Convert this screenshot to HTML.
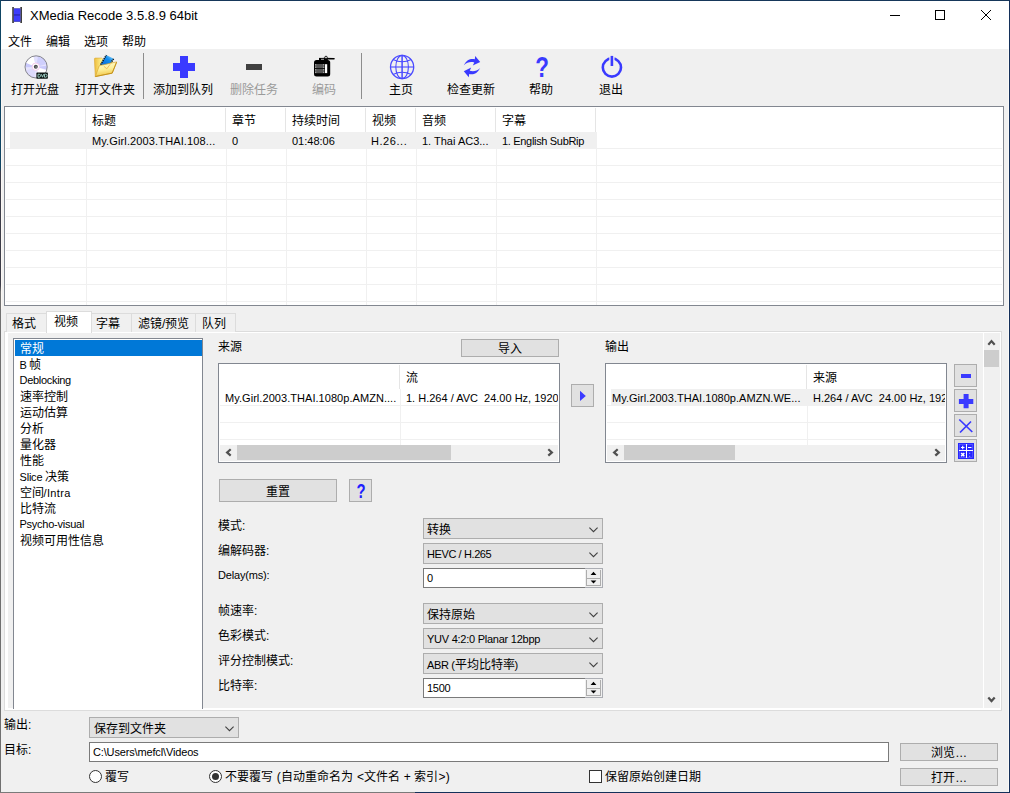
<!DOCTYPE html>
<html lang="zh-CN">
<head>
<meta charset="utf-8">
<title>XMedia Recode</title>
<style>
html,body{margin:0;padding:0;}
body{width:1010px;height:793px;overflow:hidden;background:#f0f0f0;font-family:"Liberation Sans",sans-serif;font-size:12px;color:#000;position:relative;}
.a{position:absolute;white-space:nowrap;}
.t{position:absolute;white-space:nowrap;font-size:12px;line-height:14px;}
.l{position:absolute;white-space:nowrap;font-size:11px;line-height:14px;}
.btn{position:absolute;box-sizing:border-box;background:#e1e1e1;border:1px solid #adadad;text-align:center;font-size:12px;}
.combo{position:absolute;box-sizing:border-box;background:#e1e1e1;border:1px solid #adadad;height:21px;width:180px;}
.combo>span{position:absolute;left:3px;top:4px;font-size:12px;line-height:14px;white-space:nowrap;}
.combo>span.s{font-size:11px;top:3px;}
.combo svg{position:absolute;right:4px;top:7.500px;}
.edit{position:absolute;box-sizing:border-box;background:#fff;border:1px solid #7a7a7a;}
.gl{position:absolute;background:#f0f0f0;}

.tab{box-sizing:border-box;border:1px solid #dcdcdc;border-bottom:none;background:#f0f0f0;}
.s{font-size:11px;}
.spin{width:18px;height:20px;box-sizing:border-box;border:1px solid #abadb3;border-left:none;background:#f0f0f0;}
.spin i{position:absolute;left:1px;top:1px;width:15px;height:16px;box-sizing:border-box;border:1px solid #adadad;border-top:none;background:#f0f0f0;}
.spin b{position:absolute;left:1px;top:9px;width:15px;height:1px;background:#adadad;}
.spin svg{position:absolute;left:5px;top:2px;}
.radio{width:13px;height:13px;box-sizing:border-box;border:1px solid #333;border-radius:50%;background:#fff;}
.radio i{position:absolute;left:2px;top:2px;width:7px;height:7px;border-radius:50%;background:#333;}
</style>
</head>
<body>
<!-- window frame -->
<div class="a" style="left:0;top:0;width:1010px;height:49px;background:#fff;"></div>
<div class="a" style="left:0;top:0;width:1010px;height:1px;background:#16375a;"></div>
<div class="a" style="left:0;top:0;width:1px;height:793px;background:linear-gradient(#0f4564 0,#0f4564 168px,#3c3c48 172px,#3c3c48 285px,#707070 292px,#707070 100%);"></div>
<div class="a" style="left:1009px;top:0;width:1px;height:793px;background:#14305a;"></div>
<div class="a" style="left:0;top:792px;width:1010px;height:1px;background:#7a7a7a;"></div>
<div class="a" style="left:415px;top:792px;width:595px;height:1px;background:#14305a;"></div>

<div class="a" style="left:1px;top:49px;width:1px;height:260px;background:#fbf7f3;"></div>
<div class="a" style="left:1008px;top:49px;width:1px;height:743px;background:#fbf9f7;"></div>
<!-- title -->
<svg class="a" style="left:12px;top:7px" width="10" height="16" viewBox="0 0 10 16"><rect x="0.200" y="0" width="1.700" height="16" fill="#3f3f3f"/><rect x="8.300" y="0" width="1.700" height="16" fill="#3f3f3f"/><rect x="1.900" y="1.300" width="6.400" height="13.500" fill="#2a2ab8"/><rect x="1.900" y="2" width="6.400" height="5.200" fill="#3b3bfa"/><rect x="1.900" y="8.700" width="6.400" height="5.300" fill="#3b3bfa"/></svg>
<div class="a" id="title" style="left:30px;top:7px;font-size:13px;line-height:18px;letter-spacing:0px;">XMedia Recode 3.5.8.9 64bit</div>
<svg class="a" style="left:884px;top:5px" width="112" height="20" viewBox="0 0 112 20"><g stroke="#000" stroke-width="1" fill="none"><path d="M6 10.5H16"/><rect x="51.5" y="5.5" width="9" height="9"/><path d="M97 5L107 15M107 5L97 15"/></g></svg>

<!-- menu -->
<div class="t" style="left:8px;top:35px;">文件</div>
<div class="t" style="left:46px;top:35px;">编辑</div>
<div class="t" style="left:84px;top:35px;">选项</div>
<div class="t" style="left:122px;top:35px;">帮助</div>

<!-- toolbar -->
<div class="t" style="left:11px;top:83px;">打开光盘</div>
<div class="t" style="left:75px;top:83px;">打开文件夹</div>
<div class="a" style="left:143px;top:53px;width:1px;height:46px;background:#8d8d8d;"></div>
<div class="t" style="left:153px;top:83px;">添加到队列</div>
<div class="t" style="left:230px;top:83px;color:#9a9a9a;">删除任务</div>
<div class="t" style="left:312px;top:83px;color:#9a9a9a;">编码</div>
<div class="a" style="left:361px;top:53px;width:1px;height:46px;background:#8d8d8d;"></div>
<div class="t" style="left:389px;top:83px;">主页</div>
<div class="t" style="left:447px;top:83px;">检查更新</div>
<div class="t" style="left:529px;top:83px;">帮助</div>
<div class="t" style="left:599px;top:83px;">退出</div>

<!-- toolbar icons -->
<svg class="a" style="left:23px;top:54px" width="26" height="26" viewBox="0 0 26 26">
<circle cx="13.1" cy="12.9" r="10.9" fill="#e6e4fd"/>
<path d="M13.1 12.9L2.21 13.28A10.9 10.9 0 0 1 2.99 8.82Z" fill="#c9c9fb"/>
<path d="M13.1 12.9L2.99 8.82A10.9 10.9 0 0 1 10.46 2.32Z" fill="#ffffff"/>
<path d="M13.1 12.9L10.46 2.32A10.9 10.9 0 0 1 14.99 2.17Z" fill="#e2e0fe"/>
<path d="M13.1 12.9L14.99 2.17A10.9 10.9 0 0 1 23.63 10.08Z" fill="#cfcffc"/>
<path d="M13.1 12.9L23.94 11.76A10.9 10.9 0 0 1 23.68 15.54Z" fill="#c9c9fb"/>
<path d="M13.1 12.9L23.47 16.27A10.9 10.9 0 0 1 16.47 23.27Z" fill="#ffffff"/>
<path d="M13.1 12.9L11.21 23.63A10.9 10.9 0 0 1 2.86 16.63Z" fill="#dcdafc"/>
<circle cx="13.1" cy="12.9" r="11.1" fill="none" stroke="#85858d" stroke-width="1"/>
<circle cx="12.800" cy="12.700" r="3.700" fill="#fff" stroke="#f2c4ea" stroke-width="0.900"/>
<circle cx="12.800" cy="12.700" r="2" fill="#4a4a4e"/>
<circle cx="13.100" cy="13" r="0.800" fill="#9a9a9e"/>
<rect x="13.400" y="18.600" width="11.500" height="6.100" rx="0.800" fill="#0c1412"/>
<path d="M15 20.200v3h1.200q1.300 0 1.300-1.500t-1.300-1.500zM18.300 20.200l1.200 3l1.200-3M21.500 20.200v3h1.200q1.300 0 1.300-1.500t-1.300-1.500z" fill="none" stroke="#a8dcd2" stroke-width="0.900"/>
</svg>
<svg class="a" style="left:92px;top:53px" width="28" height="26" viewBox="0 0 28 26">
<defs><linearGradient id="fg" x1="0" y1="0" x2="0.200" y2="1"><stop offset="0" stop-color="#fffcd8"/><stop offset="0.550" stop-color="#fdf09a"/><stop offset="1" stop-color="#f2c648"/></linearGradient>
<linearGradient id="fb" x1="0" y1="0" x2="1" y2="0"><stop offset="0" stop-color="#eebc3c"/><stop offset="0.400" stop-color="#fdf08c"/><stop offset="1" stop-color="#fbe680"/></linearGradient>
<linearGradient id="fl" x1="0" y1="1" x2="1" y2="0"><stop offset="0" stop-color="#0a64d8"/><stop offset="0.600" stop-color="#1490f0"/><stop offset="1" stop-color="#a8e4fa"/></linearGradient></defs>
<path d="M2.400 5.700L2.900 5.100L9.600 5.100L11.600 7L20 7L20 13L3.300 23.700Z" fill="url(#fb)" stroke="#d9a630" stroke-width="0.600"/>
<path d="M14.200 2L21.800 5.700L16.500 12.500L8.300 11.700Z" fill="url(#fl)"/>
<path d="M8.600 11.600L14.400 2.100" stroke="#111" stroke-width="1.500" stroke-dasharray="1.200 0.900"/>
<path d="M21.600 5.800L19 9.600" stroke="#111" stroke-width="1.500" stroke-dasharray="1.200 0.900"/>
<path d="M3.300 23.600L7.300 12.700L24.700 8.900L20.200 20.200Z" fill="url(#fg)" stroke="#d8a830" stroke-width="0.700"/>
<path d="M3.500 23.500L20.200 20.100L24.600 9.200" fill="none" stroke="#c4921c" stroke-width="1"/>
<path d="M11.800 13.200L14.800 15.800L18.200 11.200" fill="none" stroke="#f0b050" stroke-width="0.800"/>
</svg>
<svg class="a" style="left:173px;top:56px" width="22" height="22" viewBox="0 0 22 22"><path d="M7 0h8v7h7v8h-7v7h-8v-7h-7v-8h7z" fill="#3a3aff"/></svg>
<div class="a" style="left:246px;top:64px;width:16px;height:6px;background:#404040;"></div>
<svg class="a" style="left:313px;top:55px" width="22" height="23" viewBox="0 0 22 23">
<rect x="1" y="5" width="16.200" height="16.600" rx="2.500" fill="#000"/>
<rect x="6" y="2.900" width="8.800" height="3" fill="#000"/>
<path d="M11 3.600L21 3.800" stroke="#000" stroke-width="1.600" stroke-linecap="round"/>
<circle cx="13" cy="2.500" r="1.300" fill="#ddd" stroke="#000" stroke-width="0.800"/>
<rect x="8" y="3.800" width="3" height="1" fill="#aaa"/>
<rect x="2" y="9" width="9.500" height="4.200" fill="#555"/><rect x="2" y="14" width="9.500" height="4.200" fill="#555"/>
<g fill="#ccc"><rect x="2.200" y="9.300" width="1" height="1"/><rect x="2.200" y="11.700" width="1" height="1"/><rect x="2.200" y="14.300" width="1" height="1"/><rect x="2.200" y="16.800" width="1" height="1"/><rect x="10.200" y="9.300" width="1" height="1"/><rect x="10.200" y="11.700" width="1" height="1"/><rect x="10.200" y="14.300" width="1" height="1"/><rect x="10.200" y="16.800" width="1" height="1"/></g>
<rect x="12" y="9.200" width="2.200" height="8.900" fill="#fff"/>
</svg>
<svg class="a" style="left:389px;top:54px" width="26" height="26" viewBox="0 0 26 26"><g fill="none" stroke="#4a4aff" stroke-width="1.100"><circle cx="13.100" cy="13" r="11.600" stroke-width="1.300"/><ellipse cx="13.100" cy="13" rx="6.300" ry="11.600"/><path d="M13.100 1.400V24.600" stroke-width="1.500"/><path d="M1.500 13H24.700"/><path d="M4 5.500Q13.100 10 22.200 5.500M4 20.500Q13.100 16 22.200 20.500"/></g></svg>
<svg class="a" style="left:462px;top:55px" width="20" height="24" viewBox="0 0 20 24"><g fill="#3a3aff"><path id="ra" d="M1.800 10.200C5 4.200 9 3.300 12.800 4.300L13.200 0.900L18.200 7L10.800 10.600L12.300 7.500C9 6.500 5 7 1.800 10.200Z"/><use href="#ra" transform="rotate(180 10 11.600)"/></g></svg>
<div class="a" style="left:532px;top:51px;width:20px;font-size:29.500px;line-height:32px;font-weight:bold;color:#3a3aff;text-align:center;transform:scaleX(0.76);">?</div>
<svg class="a" style="left:600px;top:55px" width="24" height="24" viewBox="0 0 24 24"><g fill="none"><circle cx="11.900" cy="12.500" r="9.100" stroke="#3a3aff" stroke-width="2.600"/><path d="M11.900 0V10" stroke="#f0f0f0" stroke-width="5.200"/><path d="M11.900 0.900V11" stroke="#3a3aff" stroke-width="2.600"/></g></svg>

<!-- file list -->
<div class="a" id="list" style="left:4px;top:106px;width:1000px;height:200px;box-sizing:border-box;border:1px solid #828790;background:#fff;"></div>
<div class="gl" style="left:10px;top:132px;width:586px;height:16px;"></div>
<!-- row lines -->
<div class="gl" style="left:6px;top:148px;width:996px;height:1px;"></div>
<div class="gl" style="left:6px;top:165px;width:996px;height:1px;"></div>
<div class="gl" style="left:6px;top:182px;width:996px;height:1px;"></div>
<div class="gl" style="left:6px;top:199px;width:996px;height:1px;"></div>
<div class="gl" style="left:6px;top:216px;width:996px;height:1px;"></div>
<div class="gl" style="left:6px;top:233px;width:996px;height:1px;"></div>
<div class="gl" style="left:6px;top:250px;width:996px;height:1px;"></div>
<div class="gl" style="left:6px;top:267px;width:996px;height:1px;"></div>
<div class="gl" style="left:6px;top:284px;width:996px;height:1px;"></div>
<div class="gl" style="left:6px;top:301px;width:996px;height:1px;"></div>
<!-- col lines -->
<div class="gl" style="left:85px;top:108px;width:1px;height:24px;background:#e5e5e5;"></div><div class="gl" style="left:86px;top:132px;width:1px;height:173px;"></div>
<div class="gl" style="left:225px;top:108px;width:1px;height:24px;background:#e5e5e5;"></div><div class="gl" style="left:226px;top:132px;width:1px;height:173px;"></div>
<div class="gl" style="left:285px;top:108px;width:1px;height:24px;background:#e5e5e5;"></div><div class="gl" style="left:286px;top:132px;width:1px;height:173px;"></div>
<div class="gl" style="left:365px;top:108px;width:1px;height:24px;background:#e5e5e5;"></div><div class="gl" style="left:366px;top:132px;width:1px;height:173px;"></div>
<div class="gl" style="left:415px;top:108px;width:1px;height:24px;background:#e5e5e5;"></div><div class="gl" style="left:416px;top:132px;width:1px;height:173px;"></div>
<div class="gl" style="left:495px;top:108px;width:1px;height:24px;background:#e5e5e5;"></div><div class="gl" style="left:496px;top:132px;width:1px;height:173px;"></div>
<div class="gl" style="left:595px;top:108px;width:1px;height:24px;background:#e5e5e5;"></div><div class="gl" style="left:596px;top:132px;width:1px;height:173px;"></div>
<div class="t" style="left:92px;top:114px;">标题</div>
<div class="t" style="left:232px;top:114px;">章节</div>
<div class="t" style="left:292px;top:114px;">持续时间</div>
<div class="t" style="left:372px;top:114px;">视频</div>
<div class="t" style="left:422px;top:114px;">音频</div>
<div class="t" style="left:502px;top:114px;">字幕</div>
<div class="l" style="left:92px;top:134px;letter-spacing:0.13px;">My.Girl.2003.THAI.108...</div>
<div class="l" style="left:232px;top:134px;">0</div>
<div class="l" style="left:292px;top:134px;">01:48:06</div>
<div class="l" style="left:371px;top:134px;letter-spacing:0.55px;">H.26...</div>
<div class="l" style="left:422px;top:134px;">1. Thai AC3...</div>
<div class="l" style="left:502px;top:134px;letter-spacing:-0.32px;">1. English SubRip</div>

<!-- tabs -->
<div class="a" style="left:4px;top:331px;width:998px;height:380px;box-sizing:border-box;border:1px solid #dcdcdc;background:#f0f0f0;"></div>
<div class="a" style="left:5px;top:332px;width:996px;height:378px;box-sizing:border-box;border:1px solid #fff;border-left-width:3px;border-bottom-width:2px;"></div>
<div class="a tab" style="left:6px;top:313px;width:41px;height:19px;"></div>
<div class="a tab" style="left:91px;top:313px;width:41px;height:19px;"></div>
<div class="a tab" style="left:131px;top:313px;width:65px;height:19px;"></div>
<div class="a tab" style="left:195px;top:313px;width:41px;height:19px;"></div>
<div class="a" style="left:46px;top:311px;width:46px;height:22px;box-sizing:border-box;border:1px solid #dcdcdc;border-bottom:none;background:#fff;"></div>
<div class="t" style="left:12px;top:317px;">格式</div>
<div class="t" style="left:54px;top:315px;">视频</div>
<div class="t" style="left:96px;top:317px;">字幕</div>
<div class="t" style="left:138px;top:317px;">滤镜/预览</div>
<div class="t" style="left:202px;top:317px;">队列</div>

<!-- left listbox -->
<div class="a" style="left:13px;top:338px;width:190px;height:371px;box-sizing:border-box;border:1px solid #828790;border-bottom:none;background:#fff;"></div>
<div class="a" style="left:15px;top:340px;width:187px;height:16px;background:#0078d7;"></div>
<div class="t" style="left:19.500px;top:342px;color:#fff;">常规</div>
<div class="t" style="left:19.500px;top:358px;"><span class="s">B</span><span style="letter-spacing:-1.500px"> </span>帧</div>
<div class="t s" style="left:19.500px;top:373px;letter-spacing:-0.3px;">Deblocking</div>
<div class="t" style="left:19.500px;top:390px;">速率控制</div>
<div class="t" style="left:19.500px;top:406px;">运动估算</div>
<div class="t" style="left:19.500px;top:422px;">分析</div>
<div class="t" style="left:19.500px;top:438px;">量化器</div>
<div class="t" style="left:19.500px;top:454px;">性能</div>
<div class="t" style="left:19.500px;top:470px;"><span class="s" style="letter-spacing:-0.2px">Slice</span><span style="letter-spacing:-1px"> </span>决策</div>
<div class="t" style="left:19.500px;top:486px;">空间<span class="s" style="letter-spacing:0.35px">/Intra</span></div>
<div class="t" style="left:19.500px;top:502px;">比特流</div>
<div class="t s" style="left:19.500px;top:517px;letter-spacing:-0.25px;">Psycho-visual</div>
<div class="t" style="left:19.500px;top:534px;">视频可用性信息</div>

<!-- right scrollbar -->
<div class="a" style="left:983px;top:333px;width:1px;height:375px;background:#fff;"></div>
<div class="a" style="left:984px;top:350px;width:15px;height:17px;background:#cdcdcd;"></div>
<svg class="a" style="left:986px;top:337px" width="11" height="10" viewBox="0 0 11 10"><path d="M2.300 7.700L5.500 4.100L8.700 7.700" fill="none" stroke="#505050" stroke-width="2.200"/></svg>
<svg class="a" style="left:986px;top:695px" width="11" height="10" viewBox="0 0 11 10"><path d="M2.300 2.500L5.500 6.100L8.700 2.500" fill="none" stroke="#505050" stroke-width="2.200"/></svg>

<!-- source -->
<div class="t" style="left:218px;top:340px;">来源</div>
<div class="btn" style="left:461px;top:339px;width:98px;height:18px;line-height:18px;">导入</div>
<div class="a" style="left:218px;top:363px;width:342px;height:100px;box-sizing:border-box;border:1px solid #828790;background:#fff;"></div>
<div class="gl" style="left:220px;top:405px;width:338px;height:1px;"></div>
<div class="gl" style="left:220px;top:422px;width:338px;height:1px;"></div>
<div class="gl" style="left:220px;top:439px;width:338px;height:1px;"></div>
<div class="gl" style="left:399px;top:365px;width:1px;height:24px;background:#e5e5e5;"></div>
<div class="gl" style="left:400px;top:389px;width:1px;height:56px;"></div>
<div class="gl" style="left:220px;top:445px;width:338px;height:16px;"></div>
<div class="a" style="left:237px;top:445px;width:214px;height:15px;background:#cdcdcd;"></div>
<svg class="a hs" style="left:223px;top:447px" width="10" height="11" viewBox="0 0 10 11"><path d="M7.700 2.200L4.100 5.400L7.700 8.600" fill="none" stroke="#505050" stroke-width="2.200"/></svg>
<svg class="a hs" style="left:546px;top:447px" width="10" height="11" viewBox="0 0 10 11"><path d="M2.300 2.200L5.900 5.400L2.300 8.600" fill="none" stroke="#505050" stroke-width="2.200"/></svg>
<div class="t" style="left:406px;top:371px;">流</div>
<div class="l" style="left:225px;top:391px;letter-spacing:0.05px;">My.Girl.2003.THAI.1080p.AMZN....</div>
<div class="l" style="left:406px;top:391px;width:152px;overflow:hidden;white-space:pre;">1. H.264 / AVC  24.00 Hz, 1920</div>

<div class="btn" style="left:571px;top:384px;width:23px;height:23px;"></div>
<svg class="a" style="left:579px;top:390px" width="8" height="12" viewBox="0 0 8 12"><path d="M1 0.800L6.800 5.900L1 11Z" fill="#3a3aff"/></svg>

<!-- output -->
<div class="t" style="left:605px;top:340px;">输出</div>
<div class="a" style="left:605px;top:363px;width:342px;height:100px;box-sizing:border-box;border:1px solid #828790;background:#fff;"></div>
<div class="gl" style="left:611px;top:389px;width:334px;height:16px;"></div>
<div class="gl" style="left:607px;top:405px;width:338px;height:1px;"></div>
<div class="gl" style="left:607px;top:422px;width:338px;height:1px;"></div>
<div class="gl" style="left:607px;top:439px;width:338px;height:1px;"></div>
<div class="gl" style="left:806px;top:365px;width:1px;height:24px;background:#e5e5e5;"></div>
<div class="gl" style="left:807px;top:389px;width:1px;height:56px;"></div>
<div class="gl" style="left:607px;top:445px;width:338px;height:16px;"></div>
<div class="a" style="left:624px;top:445px;width:111px;height:15px;background:#cdcdcd;"></div>
<svg class="a hs" style="left:610px;top:447px" width="10" height="11" viewBox="0 0 10 11"><path d="M7.700 2.200L4.100 5.400L7.700 8.600" fill="none" stroke="#505050" stroke-width="2.200"/></svg>
<svg class="a hs" style="left:933px;top:447px" width="10" height="11" viewBox="0 0 10 11"><path d="M2.300 2.200L5.900 5.400L2.300 8.600" fill="none" stroke="#505050" stroke-width="2.200"/></svg>
<div class="t" style="left:813px;top:371px;">来源</div>
<div class="l" style="left:612px;top:391px;letter-spacing:0.03px;">My.Girl.2003.THAI.1080p.AMZN.WE...</div>
<div class="l" style="left:813px;top:391px;width:132px;overflow:hidden;white-space:pre;">H.264 / AVC  24.00 Hz, 1920</div>

<div class="btn" style="left:954px;top:364px;width:23px;height:23px;"></div>
<div class="btn" style="left:954px;top:389px;width:23px;height:23px;"></div>
<div class="btn" style="left:954px;top:414px;width:23px;height:23px;"></div>
<div class="btn" style="left:954px;top:439px;width:23px;height:23px;"></div>
<div class="a" style="left:961px;top:374px;width:10px;height:4px;background:#3a3aff;"></div>
<svg class="a" style="left:958px;top:393px" width="16" height="16" viewBox="0 0 16 16"><path d="M5.600 1h5v5h4.700v5h-4.700v4.200h-5v-4.200h-4.700v-5h4.700z" fill="#3a3aff"/></svg>
<svg class="a" style="left:958px;top:418px" width="16" height="16" viewBox="0 0 16 16"><path d="M1.300 1.500L14.300 14M13 3.500L2 14.500" stroke="#3a3aff" stroke-width="1.700" fill="none"/></svg>
<svg class="a" style="left:958px;top:443px" width="16" height="16" viewBox="0 0 16 16"><rect x="0" y="0" width="16" height="16" fill="#2626ff"/><rect x="1.500" y="1.500" width="13" height="13" fill="none" stroke="#6a6aff" stroke-width="0.600"/><g stroke="#fff" fill="none"><path d="M1 7.500H15M8.500 1V15" stroke-width="1"/><path d="M3 4.500H6.500M4.700 2.800V6.200M10 4.500H13.500" stroke-width="1.100"/><path d="M3.200 10L6.300 13.200M6.300 10L3.200 13.200" stroke-width="1.600"/><path d="M11.700 9.800V10.800M11.700 12.800V13.800" stroke-width="1" stroke="#b0b0ff"/></g></svg>

<!-- reset -->
<div class="btn" style="left:219px;top:479px;width:118px;height:23px;line-height:24px;">重置</div>
<div class="btn" style="left:349px;top:479px;width:23px;height:23px;"></div><div class="a" style="left:351px;top:480px;width:20px;text-align:center;font-size:20px;line-height:22px;font-weight:bold;color:#2020ff;transform:scaleX(0.74);">?</div>

<!-- form -->
<div class="t" style="left:218px;top:519px;">模式:</div>
<div class="t" style="left:218px;top:544px;">编解码器:</div>
<div class="t s" style="left:218px;top:568px;letter-spacing:-0.17px;">Delay(ms):</div>
<div class="t" style="left:218px;top:604px;">帧速率:</div>
<div class="t" style="left:218px;top:629px;">色彩模式:</div>
<div class="t" style="left:218px;top:654px;">评分控制模式:</div>
<div class="t" style="left:218px;top:679px;">比特率:</div>

<div class="combo" style="left:423px;top:518px;"><span>转换</span><svg width="9" height="6" viewBox="0 0 9 6"><path d="M0.400 0.600L4.500 4.700L8.600 0.600" fill="none" stroke="#404040" stroke-width="1.100"/></svg></div>
<div class="combo" style="left:423px;top:543px;"><span class="s" style="letter-spacing:-0.4px">HEVC / H.265</span><svg width="9" height="6" viewBox="0 0 9 6"><path d="M0.400 0.600L4.500 4.700L8.600 0.600" fill="none" stroke="#404040" stroke-width="1.100"/></svg></div>
<div class="edit" style="left:423px;top:568px;width:163px;height:20px;"><span class="l" style="left:3px;top:2px;">0</span></div>
<div class="combo" style="left:423px;top:603px;"><span>保持原始</span><svg width="9" height="6" viewBox="0 0 9 6"><path d="M0.400 0.600L4.500 4.700L8.600 0.600" fill="none" stroke="#404040" stroke-width="1.100"/></svg></div>
<div class="combo" style="left:423px;top:628px;"><span class="s" style="letter-spacing:-0.25px">YUV 4:2:0 Planar 12bpp</span><svg width="9" height="6" viewBox="0 0 9 6"><path d="M0.400 0.600L4.500 4.700L8.600 0.600" fill="none" stroke="#404040" stroke-width="1.100"/></svg></div>
<div class="combo" style="left:423px;top:653px;"><span><span class="s" style="letter-spacing:-0.35px">ABR (</span>平均比特率<span class="s">)</span></span><svg width="9" height="6" viewBox="0 0 9 6"><path d="M0.400 0.600L4.500 4.700L8.600 0.600" fill="none" stroke="#404040" stroke-width="1.100"/></svg></div>
<div class="edit" style="left:423px;top:678px;width:163px;height:20px;"><span class="l" style="left:3px;top:2px;letter-spacing:-0.25px;">1500</span></div>

<!-- spinners -->
<div class="a spin" style="left:585px;top:568px;"><i></i><b></b><svg width="7" height="14" viewBox="0 0 7 14"><path d="M0.600 4L3.500 0.800L6.400 4ZM0.600 9.400L3.500 12.600L6.400 9.400Z" fill="#000"/></svg></div>
<div class="a spin" style="left:585px;top:678px;"><i></i><b></b><svg width="7" height="14" viewBox="0 0 7 14"><path d="M0.600 4L3.500 0.800L6.400 4ZM0.600 9.400L3.500 12.600L6.400 9.400Z" fill="#000"/></svg></div>

<!-- bottom -->
<div class="t" style="left:4px;top:718px;">输出:</div>
<div class="t" style="left:4px;top:743px;">目标:</div>
<div class="combo" style="left:89px;top:717px;width:150px;"><span style="left:4px;">保存到文件夹</span><svg width="9" height="6" viewBox="0 0 9 6"><path d="M0.400 0.600L4.500 4.700L8.600 0.600" fill="none" stroke="#404040" stroke-width="1.100"/></svg></div>
<div class="edit" style="left:89px;top:742px;width:800px;height:20px;"><span class="l" style="left:3px;top:2px;letter-spacing:-0.15px;">C:\Users\mefcl\Videos</span></div>
<div class="btn" style="left:900px;top:743px;width:98px;height:18px;line-height:18px;letter-spacing:0.4px;">浏览...</div>
<div class="btn" style="left:900px;top:768px;width:98px;height:18px;line-height:18px;letter-spacing:0.4px;">打开...</div>
<div class="a radio" style="left:89px;top:770px;"></div>
<div class="t" style="left:105px;top:770px;">覆写</div>
<div class="a radio" style="left:209px;top:770px;"><i></i></div>
<div class="t" style="left:225px;top:770px;letter-spacing:0.1px;">不要覆写 (自动重命名为 &lt;文件名 + 索引&gt;)</div>
<div class="a" style="left:589px;top:770px;width:13px;height:13px;box-sizing:border-box;border:1px solid #333;background:#fff;"></div>
<div class="t" style="left:605px;top:770px;">保留原始创建日期</div>

</body>
</html>
